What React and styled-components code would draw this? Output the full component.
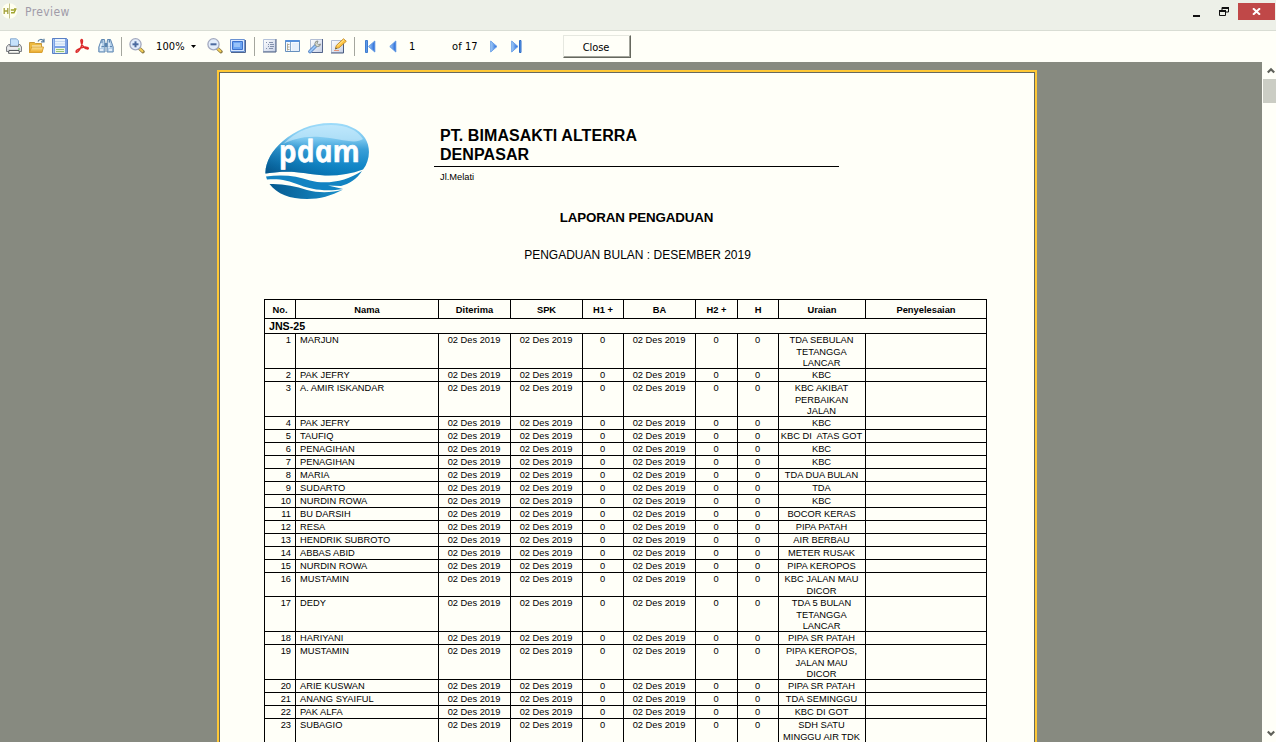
import React from 'react';
import styled, { createGlobalStyle } from 'styled-components';

const Global = createGlobalStyle`
  * { box-sizing: border-box; }
  html, body { margin: 0; overflow: hidden; background: #fffff8; }
`;

const UI = '"DejaVu Sans Condensed", "DejaVu Sans", sans-serif';
const DOC = '"Liberation Sans", Arial, sans-serif';

const Window = styled.div`
  width: 1276px;
  height: 742px;
  display: flex;
  flex-direction: column;
  background: #fffff8;
  font-family: ${UI};
`;

const TitleBar = styled.header`
  height: 31px;
  flex: none;
  display: flex;
  align-items: flex-start;
  background: #edf0e8;
  border-bottom: 1px solid #d9ddd4;
  padding: 3px 1px 0 1px;
`;

const TitleText = styled.span`
  margin-left: 7px;
  flex: 1;
  font-size: 12px;
  line-height: 18px;
  letter-spacing: 0.4px;
  color: #a09ba8;
`;

const CaptionButton = styled.div`
  width: ${(p) => p.$w}px;
  height: 17px;
  display: flex;
  align-items: center;
  justify-content: center;
  background: ${(p) => (p.$close ? '#c04848' : 'transparent')};
`;

const Toolbar = styled.nav`
  height: 31px;
  flex: none;
  display: flex;
  align-items: center;
  padding: 0 0 1px 2px;
  background: #fffff8;
`;

const Tool = styled.div`
  width: ${(p) => p.$w || 23}px;
  height: 22px;
  flex: none;
  display: flex;
  align-items: center;
  justify-content: center;
`;

const Separator = styled.div`
  width: 1px;
  height: 19px;
  flex: none;
  margin: 0 ${(p) => p.$after}px 0 ${(p) => p.$before}px;
  background: #a4a69e;
`;

const ToolText = styled.span`
  width: ${(p) => p.$w}px;
  padding: 1px 0 0 ${(p) => p.$indent || 0}px;
  flex: none;
  font-size: 11px;
  line-height: 14px;
  letter-spacing: 0.1px;
  white-space: nowrap;
  color: #000;
`;

const CloseButton = styled.button`
  width: 68px;
  height: 23px;
  margin-left: 35px;
  padding: 2px 2px 0 0;
  font: 11px ${UI};
  letter-spacing: -0.1px;
  color: #000;
  background: #fffff8;
  border: 1px solid;
  border-color: #e6e8e0 #66685f #66685f #e6e8e0;
  box-shadow: inset -1px -1px 0 #a3a59c;
`;

const Body = styled.div`
  flex: 1;
  min-height: 0;
  display: flex;
`;

const Viewport = styled.main`
  width: 1262px;
  padding: 8px 0 0 217px;
  overflow: hidden;
  background: #878a80;
`;

const Paper = styled.article`
  width: 820px;
  height: 1160px;
  border: 2px solid #ffc836;
  outline: 1px solid #66695f;
  outline-offset: -3px;
  background: #fffff8;
  padding: 51px 0 0 45px;
  font-family: ${DOC};
  color: #000;
`;

const Letterhead = styled.div`
  display: flex;
  height: 81px;
  padding-left: 1px;
`;

const Company = styled.div`
  width: 405px;
  margin-left: 64px;
`;

const CompanyName = styled.h1`
  margin: 0;
  height: 44px;
  padding: 3px 0 0 6px;
  font-size: 16px;
  line-height: 19px;
  font-weight: bold;
  letter-spacing: 0.07px;
  border-bottom: 1px solid #000;
`;

const Address = styled.p`
  margin: 5px 0 0 6px;
  font-size: 9.3px;
  line-height: 11px;
`;

const Heading = styled.h2`
  margin: 6px 0 0;
  width: 745px;
  text-align: center;
  font-size: 13.33px;
  line-height: 16px;
  letter-spacing: -0.13px;
`;

const Period = styled.p`
  margin: 22px 0 0;
  width: 747px;
  text-align: center;
  font-size: 12px;
  line-height: 15px;
`;

const Table = styled.div`
  width: 723px;
  margin-top: 36px;
  border-left: 1px solid #000;
  border-top: 1px solid #000;
`;

const Row = styled.div`
  display: grid;
  grid-template-columns: 31px 143px 72px 72px 41px 72px 42px 41px 87px 121px;
  grid-template-rows: 100%;
  height: ${(p) => p.$h}px;
`;

const HeadCell = styled.div`
  border-right: 1px solid #000;
  border-bottom: 1px solid #000;
  font-size: 9.33px;
  line-height: 20px;
  font-weight: bold;
  text-align: center;
`;

const GroupRow = styled.div`
  height: 15px;
  padding-left: 4px;
  border-right: 1px solid #000;
  border-bottom: 1px solid #000;
  font-size: 10.67px;
  line-height: 15px;
  font-weight: bold;
`;

const Cell = styled.div`
  border-right: 1px solid #000;
  border-bottom: 1px solid #000;
  padding: 1px ${(p) => (p.$align === 'right' ? 4 : 1)}px 0 ${(p) => (p.$align === 'left' ? 4 : 0)}px;
  font-size: 9.3px;
  line-height: 11.5px;
  text-align: ${(p) => p.$align || 'center'};
  white-space: pre;
`;

const ScrollBar = styled.aside`
  width: 14px;
  display: flex;
  flex-direction: column;
  align-items: flex-end;
  background: #fffff8;
`;

const ScrollArrow = styled.div`
  width: 13px;
  height: 17px;
  padding: 5px 0 0 4px;
  line-height: 0;
`;

const Thumb = styled.div`
  width: 13px;
  height: 24px;
  margin-bottom: auto;
  background: #cbcdc4;
`;

const Defs = styled.svg`
  position: absolute;
`;

const Svg = ({ w = 16, h = 16, children }) => (
  <svg width={w} height={h} viewBox={`0 0 ${w} ${h}`} fill="none">{children}</svg>
);

const Gradients = () => (
  <Defs width="0" height="0">
    <defs>
      <linearGradient id="blue" x1="0" x2="1"><stop stopColor="#a9d2fa" /><stop offset="1" stopColor="#1f63d6" /></linearGradient>
      <linearGradient id="gold" x1="0" y1="0" x2="0" y2="1"><stop stopColor="#fde69a" /><stop offset="1" stopColor="#e9a420" /></linearGradient>
      <linearGradient id="steel" x1="0" y1="0" x2="1" y2="1"><stop stopColor="#fff" /><stop offset="1" stopColor="#c6d0e6" /></linearGradient>
      <linearGradient id="sea" x1="0" y1="0" x2="0" y2="1"><stop stopColor="#9fdcfa" /><stop offset=".3" stopColor="#7cc8ef" /><stop offset=".5" stopColor="#3a9fd8" /><stop offset=".8" stopColor="#1488c8" /><stop offset="1" stopColor="#0a7cbc" /></linearGradient>
      <linearGradient id="deep" x1="0" y1="1" x2=".5" y2=".5"><stop stopColor="#054a7c" stopOpacity=".9" /><stop offset="1" stopColor="#0879b8" stopOpacity="0" /></linearGradient>
      <linearGradient id="keel" x1="0" y1="0" x2="1" y2="0"><stop stopColor="#065a90" /><stop offset="1" stopColor="#1a90cc" /></linearGradient>
    </defs>
  </Defs>
);

const AppIcon = () => (
  <Svg w={17} h={17}>
    <circle cx="8.5" cy="8" r="7.8" fill="#fffff0" />
    <path d="M8.500.5v15" stroke="#c3c28a" />
    <path d="M3.200 5v6M6.800 5v6M3.200 8h3.600" stroke="#a4a23c" strokeWidth="1.300" />
    <path d="M10 9.800h3l1.500-3M9.800 7h3.500M13 6h2.500" stroke="#a0a32d" strokeWidth="1.400" />
  </Svg>
);

const PrintIcon = () => (
  <Svg>
    <path d="M4.500 8V.8h6l2 2V8z" fill="#c6e2fb" stroke="#86aad0" />
    <path d="M2.500 6.500h1.500v2h8.500v-2H14l1.500 2.500v4.500H.5V9z" fill="#dcdee0" stroke="#808287" />
    <path d="M1.500 10h13" stroke="#fafafa" />
    <path d="M3 12.500h10l.5 2.800h-11z" fill="#fafaf5" stroke="#56595c" />
    <path d="M12 11h2" stroke="#55b948" />
  </Svg>
);

const OpenIcon = () => (
  <Svg>
    <path d="M.5 14.500V4.500h5l1 1h6v9z" fill="#edb93f" stroke="#c99a3a" />
    <path d="M3 7.500h9v3H3z" fill="#fff6d2" />
    <path d="M.5 14.500l2.200-5.500h11.800l-1.500 5.500z" fill="url(#gold)" stroke="#d9a132" />
    <path d="M9 3.500c1-2.500 4-2.700 5.500-.5M15 .8v3h-3" stroke="#567b9f" strokeWidth="1.200" />
  </Svg>
);

const SaveIcon = () => (
  <Svg>
    <path d="M.5.5h14l1 1v14H.5z" fill="#7da3e6" stroke="#5a80c4" />
    <path d="M3 1h10v7H3z" fill="#eaf4fd" />
    <path d="M3 3.500h10M3 6h10" stroke="#c4d8f0" />
    <path d="M3 10h10v5H3z" fill="#eef5e4" />
    <path d="M4 11.500h8M4 13.500h8" stroke="#9bc574" />
    <path d="M1.500 1v14" stroke="#a7c7f5" />
  </Svg>
);

const PdfIcon = () => (
  <Svg>
    <path d="M6.300 1.600c1.200-.6 1.500 1 .9 3.600-.8 3.600-2.700 7.200-4.600 8.700-1.800 1-2.200-.7-.4-2 2.500-1.700 6.600-3.200 9.300-2.700 2.500.4 2.300 2 .5 1.700C9 10.300 6 6 5.800 2.600z" stroke="#dc2a2a" strokeWidth="1.400" strokeLinejoin="round" />
  </Svg>
);

const FindIcon = () => (
  <Svg>
    <path d="M3.500 1.500h3l.5 4v8.500H.8V9z" fill="#b4cfe8" stroke="#6088b2" />
    <path d="M9.500 1.500h3L15.200 9v5H9V5.500z" fill="#b4cfe8" stroke="#6088b2" />
    <path d="M6.500 5h3v4h-3z" fill="#5a84ae" />
    <path d="M2 8.500h4M10 8.500h4M4 2v3M11.500 2v3" stroke="#6088b2" />
    <path d="M3.500 5.500L2.300 10M11 4.500v5.500M2 12h3M11 12h3" stroke="#eff8ff" strokeWidth="1.300" />
  </Svg>
);

const LensIcon = ({ plus }) => (
  <Svg>
    <path d="M10 10l4 3.700" stroke="#8c7b45" strokeWidth="3.400" strokeLinecap="round" />
    <path d="M10.500 10.500l3 2.700" stroke="#f5cf56" strokeWidth="2" strokeLinecap="round" />
    <circle cx="6.500" cy="6.300" r="5.600" fill="#e3edfb" stroke="#a3a9bf" strokeWidth="1.300" />
    <path d="M3.500 6.300h6" stroke="#4c6a9f" strokeWidth="2" />
    {plus && <path d="M6.500 3.300v6" stroke="#4c6a9f" strokeWidth="2" />}
  </Svg>
);

const FullIcon = () => (
  <Svg>
    <path d="M.5 1.500h14v12H.5z" fill="#d8e8ff" stroke="#6b92d2" />
    <path d="M2.500 3.500h10v8h-10z" fill="#6ba5f3" stroke="#3d72cc" />
    <path d="M4 6h6M4 8h6" stroke="#c6e1ff" />
    <path d="M1 14.500h14.500V2" stroke="#4f6690" />
  </Svg>
);

const OutlineIcon = () => (
  <Svg w={14} h={14}>
    <path d="M.5.5h12v12H.5z" fill="url(#steel)" stroke="#b3c1da" />
    <path d="M13 0v13H0" stroke="#4a5c80" />
    <path d="M3 3.500h1M6 3.500h4M5 5.500h1M7 5.500h4M5 7.500h1M7 7.500h4M3 9.500h1M6 9.500h4" stroke="#8391ac" />
  </Svg>
);

const ThumbsIcon = () => (
  <Svg>
    <path d="M.5 2.500h14v11H.5z" fill="#f5faff" stroke="#668fbd" />
    <path d="M.5 3h14" stroke="#5590dc" strokeWidth="2" />
    <path d="M5.500 4v9" stroke="#8aa9cc" />
    <path d="M2.500 5.500v7M3 6.500h1.500M3 9h1.500M3 11.500h1.500" stroke="#b2ab94" />
    <path d="M7 5h7v8H7z" fill="#e6effb" />
  </Svg>
);

const SetupIcon = () => (
  <Svg>
    <path d="M2.500 1.500h12v13h-12z" fill="url(#steel)" stroke="#b3bed4" />
    <path d="M14.500 1v13.500H4" stroke="#55658a" />
    <path d="M2 13.500l6-6" stroke="#4f80c4" strokeWidth="3.600" strokeLinecap="round" />
    <path d="M2 13.500l6-6" stroke="#9ac5f5" strokeWidth="1.900" strokeLinecap="round" />
    <path d="M10 3a2.800 2.800 0 1 0 2.500 3l-2 .8-1.500-1.500z" fill="#dfe2d4" stroke="#8b908a" />
  </Svg>
);

const EditIcon = () => (
  <Svg>
    <path d="M.5 2.500h12v12H.5z" fill="url(#steel)" stroke="#b3bed4" />
    <path d="M12.500 4v11H0" stroke="#4a5c80" />
    <path d="M4.500 10.500l.8-3L12.500.8l2.800 2.500-7.300 6.500z" fill="#ffc43e" stroke="#c59135" />
    <path d="M6.500 7.800l6.500-6" stroke="#ffec9e" />
    <path d="M4 11.500l.7-2 1.500 1.300z" fill="#554" />
    <path d="M3 12.500h5" stroke="#e8957a" />
  </Svg>
);

const FirstIcon = () => (
  <Svg w={11} h={13}>
    <path d="M.5.5h2v12H.5z" fill="#5d9ae8" stroke="#3f7cd0" />
    <path d="M9.800 1v11L3.600 6.500z" fill="url(#blue)" stroke="#5a93e2" />
  </Svg>
);
const PrevIcon = () => (
  <Svg w={8} h={13}><path d="M6.800 1v11L.8 6.500z" fill="url(#blue)" stroke="#5a93e2" /></Svg>
);
const NextIcon = () => (
  <Svg w={8} h={13}><path d="M.7 1v11L7 6.500z" fill="url(#blue)" stroke="#6ba0e8" /></Svg>
);
const LastIcon = () => (
  <Svg w={11} h={13}>
    <path d="M8.500.5h1.500v12H8.500z" fill="#5d9ae8" stroke="#2e6cc8" />
    <path d="M.7 1v11L7 6.500z" fill="url(#blue)" stroke="#6ba0e8" />
  </Svg>
);

const BODY = 'M.5 50.500C0 40 7 27 18 18 30 8 45 0 66 0 82 0 94 6 100 15 106 24 105 38 98 46.500 86 51 72 53 60 52.500 40 51 28 46 .5 50.500z';

const Logo = () => (
  <svg width="105" height="78" viewBox="0 0 105 78">
    <path d={BODY} fill="url(#sea)" />
    <path d={BODY} fill="url(#deep)" />
    <path d="M18 21C32 7 48 2 66 2 82 2 92 7 98 16 90 22 74 15 55 14 38 13 27 17 18 21z" fill="#e2f6ff" opacity=".5" />
    <path d="M1 53.500C18 51 32 53 45 57.500 62 62 82 58 97 48 92 56 84 61 76 63L63 62.500 78 66C60 69 45 66 36 62.500 22 57 14 55.500 2 56.500z" fill="#1283c2" />
    <path d="M4.500 61C18 60.500 30 63 42 67 55 70.500 68 69.500 78 66.500 66 73 55 76 42 76 25 76 12 71 4.500 61z" fill="url(#keel)" />
    <text transform="translate(15.500 38.700) skewX(12)" x="0" y="0" fill="#fff" stroke="#fff" strokeWidth=".7" fontFamily='"Noto Sans", "Open Sans", sans-serif' fontStyle="italic" fontWeight="600" fontSize="30.500" textLength="81" lengthAdjust="spacingAndGlyphs">pdam</text>
  </svg>
);

const HEADS = ['No.', 'Nama', 'Diterima', 'SPK', 'H1 +', 'BA', 'H2 +', 'H', 'Uraian', 'Penyelesaian'];
const DATE = '02 Des 2019';
const ROWS = [
  ['MARJUN', 'TDA SEBULAN\nTETANGGA\nLANCAR'],
  ['PAK JEFRY', 'KBC'],
  ['A. AMIR ISKANDAR', 'KBC AKIBAT\nPERBAIKAN\nJALAN'],
  ['PAK JEFRY', 'KBC'],
  ['TAUFIQ', 'KBC DI  ATAS GOT'],
  ['PENAGIHAN', 'KBC'],
  ['PENAGIHAN', 'KBC'],
  ['MARIA', 'TDA DUA BULAN'],
  ['SUDARTO', 'TDA'],
  ['NURDIN ROWA', 'KBC'],
  ['BU DARSIH', 'BOCOR KERAS'],
  ['RESA', 'PIPA PATAH'],
  ['HENDRIK SUBROTO', 'AIR BERBAU'],
  ['ABBAS ABID', 'METER RUSAK'],
  ['NURDIN ROWA', 'PIPA KEROPOS'],
  ['MUSTAMIN', 'KBC JALAN MAU\nDICOR'],
  ['DEDY', 'TDA 5 BULAN\nTETANGGA\nLANCAR'],
  ['HARIYANI', 'PIPA SR PATAH'],
  ['MUSTAMIN', 'PIPA KEROPOS,\nJALAN MAU\nDICOR'],
  ['ARIE KUSWAN', 'PIPA SR PATAH'],
  ['ANANG SYAIFUL', 'TDA SEMINGGU'],
  ['PAK ALFA', 'KBC DI GOT'],
  ['SUBAGIO', 'SDH SATU\nMINGGU AIR TDK'],
];
const HEIGHTS = { 1: 13, 2: 24, 3: 35 };

export default function App() {
  return (
    <Window>
      <Global />
      <Gradients />
      <TitleBar>
        <AppIcon />
        <TitleText>Preview</TitleText>
        <CaptionButton $w={26}>
          <Svg w={7} h={12}><path d="M0 10h7" stroke="#111" strokeWidth="2" /></Svg>
        </CaptionButton>
        <CaptionButton $w={29}>
          <Svg w={10} h={9}>
            <path d="M3 3V.5h6.500v4.500H7" stroke="#111" /><path d="M3 1h7" stroke="#111" strokeWidth="2" />
            <path d="M.5 3.500h6v5h-6z" stroke="#111" /><path d="M0 4h7" stroke="#111" strokeWidth="2" />
          </Svg>
        </CaptionButton>
        <CaptionButton $w={37} $close>
          <Svg w={9} h={7}><path d="M1 .3l7 6.400M8 .3L1 6.700" stroke="#fff" strokeWidth="2" /></Svg>
        </CaptionButton>
      </TitleBar>
      <Toolbar>
        <Tool><PrintIcon /></Tool>
        <Tool><OpenIcon /></Tool>
        <Tool><SaveIcon /></Tool>
        <Tool><PdfIcon /></Tool>
        <Tool $w={24}><FindIcon /></Tool>
        <Separator $before={3} $after={3} />
        <Tool><LensIcon plus /></Tool>
        <ToolText $w={36} $indent={8}>100%</ToolText>
        <Tool $w={19}><Svg w={5} h={3}><path d="M0 0h5L2.500 3z" fill="#000" /></Svg></Tool>
        <Tool><LensIcon /></Tool>
        <Tool><FullIcon /></Tool>
        <Separator $before={5} $after={3} />
        <Tool><OutlineIcon /></Tool>
        <Tool><ThumbsIcon /></Tool>
        <Tool><SetupIcon /></Tool>
        <Tool><EditIcon /></Tool>
        <Separator $before={4} $after={4} />
        <Tool><FirstIcon /></Tool>
        <Tool $w={22}><PrevIcon /></Tool>
        <ToolText $w={48} $indent={5}>1</ToolText>
        <ToolText $w={31}>of 17</ToolText>
        <Tool $w={21}><NextIcon /></Tool>
        <Tool $w={24}><LastIcon /></Tool>
        <CloseButton>Close</CloseButton>
      </Toolbar>
      <Body>
        <Viewport>
          <Paper>
            <Letterhead>
              <Logo />
              <Company>
                <CompanyName>PT. BIMASAKTI ALTERRA<br />DENPASAR</CompanyName>
                <Address>Jl.Melati</Address>
              </Company>
            </Letterhead>
            <Heading>LAPORAN PENGADUAN</Heading>
            <Period>PENGADUAN BULAN : DESEMBER 2019</Period>
            <Table>
              <Row $h={19}>{HEADS.map((h) => <HeadCell key={h}>{h}</HeadCell>)}</Row>
              <GroupRow>JNS-25</GroupRow>
              {ROWS.map(([name, note], i) => (
                <Row key={i} $h={HEIGHTS[i === 22 ? 3 : note.split('\n').length]}>
                  <Cell $align="right">{i + 1}</Cell>
                  <Cell $align="left">{name}</Cell>
                  <Cell>{DATE}</Cell>
                  <Cell>{DATE}</Cell>
                  <Cell>0</Cell>
                  <Cell>{DATE}</Cell>
                  <Cell>0</Cell>
                  <Cell>0</Cell>
                  <Cell>{note}</Cell>
                  <Cell />
                </Row>
              ))}
            </Table>
          </Paper>
        </Viewport>
        <ScrollBar>
          <ScrollArrow><Svg w={8} h={7}><path d="M.8 5.500L4 2.300l3.200 3.200" stroke="#5f615a" strokeWidth="2.200" /></Svg></ScrollArrow>
          <Thumb />
          <ScrollArrow><Svg w={8} h={7}><path d="M.8 1.500L4 4.700l3.200-3.200" stroke="#5f615a" strokeWidth="2.200" /></Svg></ScrollArrow>
        </ScrollBar>
      </Body>
    </Window>
  );
}
